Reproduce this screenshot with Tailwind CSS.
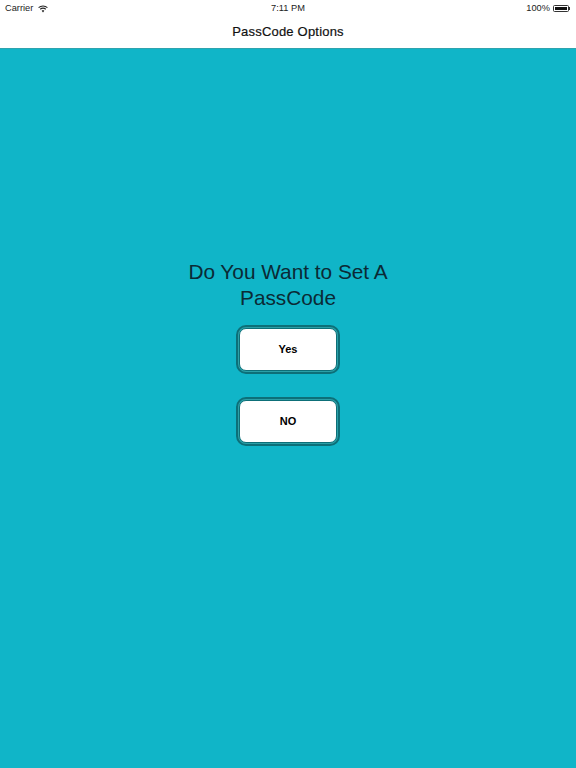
<!DOCTYPE html>
<html lang="en">
  <head>
    <meta charset="UTF-8" />
    <meta name="viewport" content="width=device-width, initial-scale=1.0" />
    <title>PassCode Options</title>
    <script src="https://cdn.jsdelivr.net/npm/@tailwindcss/browser@4"></script>
  </head>

  <body class="w-[576px] h-[768px] overflow-hidden flex flex-col bg-[#10b5c8] font-['Liberation_Sans',sans-serif]">
    <!-- status bar + nav -->
    <header class="h-[49px] shrink-0 bg-white border-b border-[#2fa3ae] flex flex-col">
      <div class="h-[17px] px-[5px] flex items-center justify-between text-[9.25px] text-[#222]">
        <div class="w-[100px] flex items-center gap-[5px]">
          <span>Carrier</span>
          <svg width="10" height="8" viewBox="0 0 10 8" fill="none" stroke="#222" stroke-width="1.1">
            <path d="M0.6 2.6C3 0.4 7 0.4 9.4 2.6" />
            <path d="M2.2 4.2C3.8 2.9 6.2 2.9 7.8 4.2" />
            <path d="M5 7.6L3.7 5.7C4.5 5.2 5.5 5.2 6.3 5.7Z" fill="#222" stroke="none" />
          </svg>
        </div>
        <span>7:11 PM</span>
        <div class="w-[100px] flex items-center justify-end gap-[3px] pr-[1px]">
          <span>100%</span>
          <div class="flex items-center">
            <div class="w-[16px] h-[7px] rounded-[1.5px] border border-[#333] p-[1px]">
              <div class="w-full h-full bg-[#111]"></div>
            </div>
            <div class="w-[1px] h-[3px] bg-[#333]"></div>
          </div>
        </div>
      </div>
      <div class="flex-1 flex items-center justify-center pb-[1px] text-[13px] text-[#111] tracking-[0.2px] [-webkit-text-stroke:0.2px_#111]">PassCode Options</div>
    </header>

    <main class="flex flex-col items-center pt-[210px]">
      <h1 class="w-[219px] text-center text-[20.8px] leading-[26px] text-[#0b2a35]">Do You Want to Set A PassCode</h1>
      <button type="button" class="mt-[14px] w-[104px] h-[49px] rounded-[10px] border-[2px] border-[#0d6f78] p-[1px] bg-[#2aa0a8]">
        <span class="w-full h-full flex items-center justify-center rounded-[7px] border border-[#0d6f78] bg-white text-[11px] font-bold text-black">Yes</span>
      </button>
      <button type="button" class="mt-[23px] w-[104px] h-[49px] rounded-[10px] border-[2px] border-[#0d6f78] p-[1px] bg-[#2aa0a8]">
        <span class="w-full h-full flex items-center justify-center rounded-[7px] border border-[#0d6f78] bg-white text-[11px] font-bold text-black">NO</span>
      </button>
    </main>
  </body>
</html>
